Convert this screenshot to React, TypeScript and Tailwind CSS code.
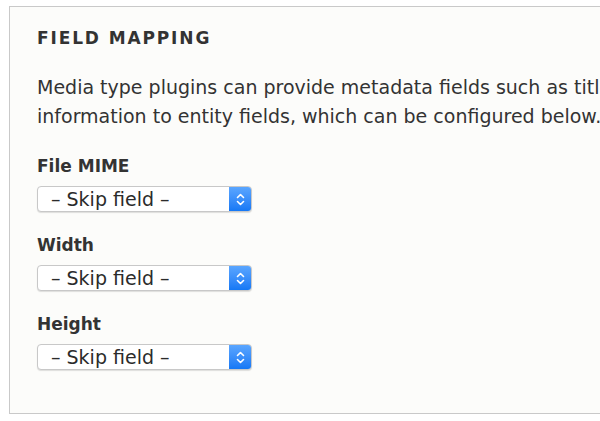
import React from 'react';

const fields = ['File MIME', 'Width', 'Height'];

function SkipSelect() {
  return (
    <div className="flex h-[26px] w-[215px] items-stretch overflow-hidden rounded-[4px] border border-[#c8c8c8] bg-white shadow-[0_1px_1px_rgba(0,0,0,0.12)]">
      <div className="flex flex-1 items-center pl-[13px] text-[19px] leading-none text-[#2b2b2b]">
        – Skip field –
      </div>
      <div className="flex w-[22px] items-center justify-center bg-gradient-to-b from-[#5aa6ff] to-[#1478f5]">
        <svg width="9" height="15" viewBox="0 0 9 15" fill="none" stroke="white" strokeWidth="1.6" strokeLinecap="round" strokeLinejoin="round">
          <path d="M1.5 5.5 L4.5 2.5 L7.5 5.5" />
          <path d="M1.5 9.5 L4.5 12.5 L7.5 9.5" />
        </svg>
      </div>
    </div>
  );
}

export default function App() {
  return (
    <div className="h-[421px] w-[600px] overflow-hidden bg-white pt-[6px] pl-[9px] font-['DejaVu_Sans',sans-serif]">
      <div className="h-[408px] w-[700px] border border-[#c9c9c9] bg-[#fcfcfa] pl-[27px] pt-[21px]">
        <h2 className="text-[17px] font-bold uppercase leading-[20px] tracking-[0.11em] text-[#333]">
          Field mapping
        </h2>
        <p className="mt-[25px] whitespace-nowrap text-[19px] leading-[29px] text-[#333]">
          Media type plugins can provide metadata fields such as title, dimensions, etc.
          <br />
          information to entity fields, which can be configured below.
        </p>
        <div className="mt-[23px] flex flex-col gap-[21px]">
          {fields.map((f) => (
            <div key={f}>
              <div className="mb-[8px] text-[17px] font-bold leading-[24px] text-[#333]">{f}</div>
              <SkipSelect />
            </div>
          ))}
        </div>
      </div>
    </div>
  );
}
